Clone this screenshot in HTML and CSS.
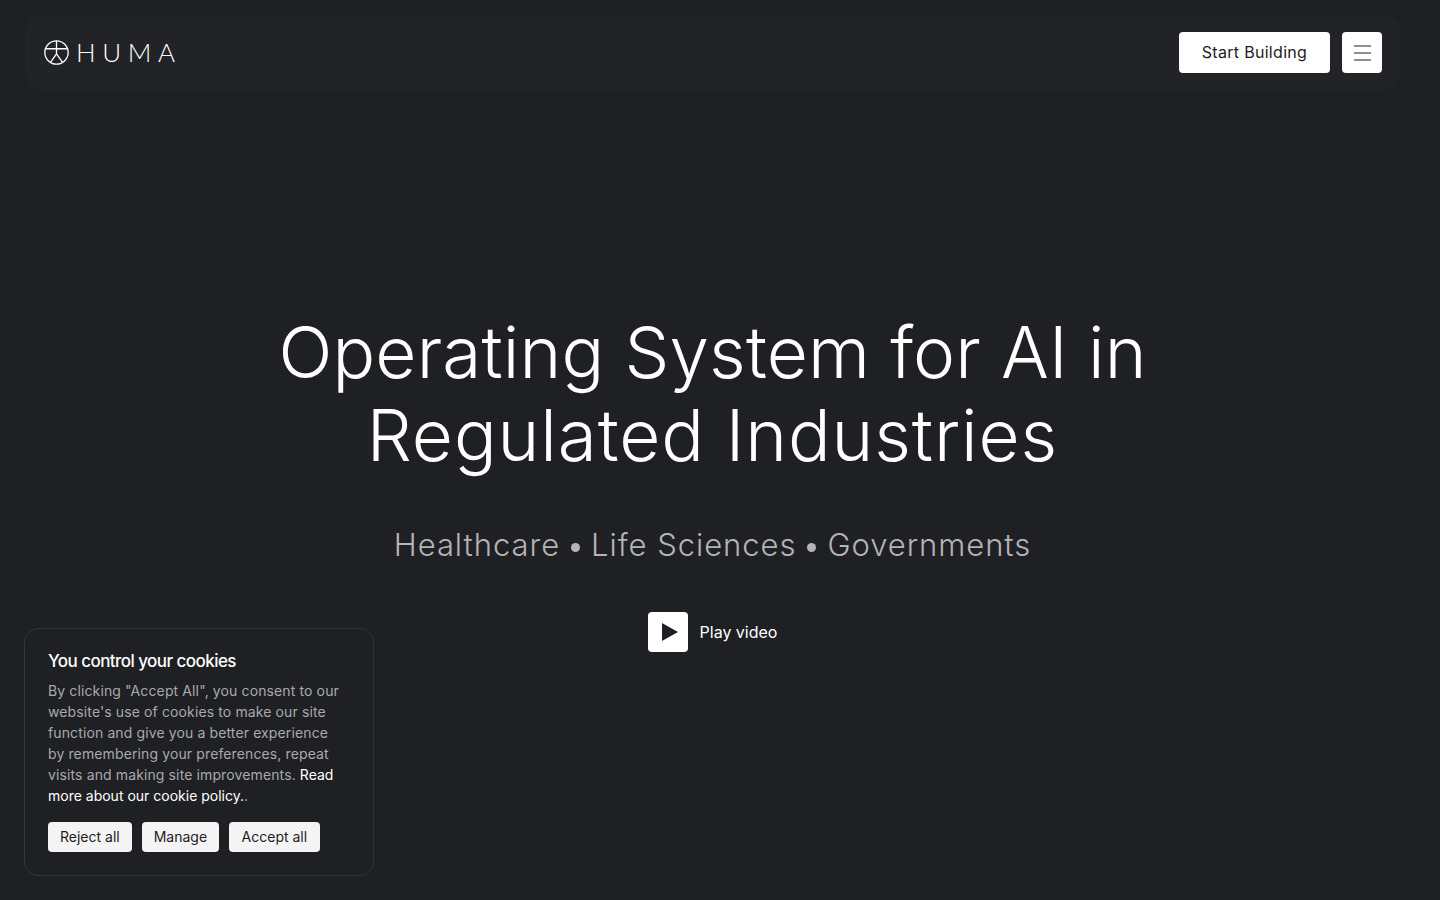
FILE: index.html
```html
<!DOCTYPE html>
<html lang="en">
<head>
<meta charset="utf-8">
<title>Huma</title>
<link rel="stylesheet" href="styles.css">
</head>
<body>
<div class="page">
  <header class="nav">
    <a class="logo" href="#">
      <svg class="logo-mark" viewBox="0 0 24 24" fill="none" stroke="#fff" stroke-width="1.25">
        <circle cx="12" cy="12" r="11.2"/>
        <path d="M2 8.4H22M12 0.8V13.4M12 13.4L6.2 21.4M12 13.4L17.8 21.4"/>
      </svg>
      <span class="logo-text">HUMA</span>
    </a>
    <div class="nav-actions">
      <a class="btn-start" href="#">Start Building</a>
      <button class="btn-menu" aria-label="Menu">
        <span class="bar"></span><span class="bar"></span><span class="bar"></span>
      </button>
    </div>
  </header>
  <main class="hero">
    <h1 class="title"><span class="title-line-a">Operating System for AI in</span><br><span class="title-line-b">Regulated Industries</span></h1>
    <p class="subtitle">Healthcare <span class="dot"></span> Life Sciences <span class="dot"></span> Governments</p>
    <a class="play" href="#">
      <span class="play-box"><svg class="play-icon" viewBox="0 0 16 18"><path d="M0 0L16 9L0 18Z" fill="#1f2024"/></svg></span>
      <span>Play video</span>
    </a>
  </main>
</div>
<aside class="cookie">
  <h2 class="cookie-title">You control your cookies</h2>
  <p class="cookie-text">By clicking "Accept All", you consent to our website's use of cookies to make our site function and give you a better experience by remembering your preferences, repeat visits and making site improvements. <a class="cookie-link" href="#">Read more about our cookie policy.</a>.</p>
  <div class="cookie-actions">
    <button class="cookie-btn">Reject all</button>
    <button class="cookie-btn">Manage</button>
    <button class="cookie-btn cookie-btn-wide">Accept all</button>
  </div>
</aside>
</body>
</html>
```
FILE: styles.css
```css
* { box-sizing: border-box; }
html, body { margin: 0; height: 100%; }
body {
  background: #1f2024;
  color: #fff;
  font-family: Inter, "Liberation Sans", sans-serif;
  overflow: hidden;
}
a { color: inherit; text-decoration: none; }
.page {
  width: 1425px;
  padding: 15px 25px 0;
}
.nav {
  height: 75px;
  background: #222327;
  border-radius: 16px;
  padding: 0 18px 0 19px;
  display: flex;
  align-items: center;
  justify-content: space-between;
}
.logo { display: flex; align-items: center; gap: 7px; }
.logo-mark { width: 25px; height: 25px; display: block; }
.logo-text {
  font-family: Lato, sans-serif;
  font-weight: 300;
  font-size: 26px;
  line-height: 1;
  letter-spacing: 6.6px;
  margin-top: -1px;
}
.nav-actions { display: flex; gap: 12px; }
.btn-start {
  width: 151px;
  height: 41px;
  background: #fff;
  color: #1f2024;
  border-radius: 4px;
  font-size: 16px;
  letter-spacing: 0.3px;
  padding-bottom: 2px;
  display: flex;
  align-items: center;
  justify-content: center;
}
.btn-menu {
  width: 40px;
  height: 41px;
  background: #fff;
  border: 0;
  border-radius: 4px;
  padding: 0;
  display: flex;
  flex-direction: column;
  align-items: center;
  justify-content: center;
  gap: 5px;
}
.bar { width: 17px; height: 2px; background: #8f8f92; display: block; }
.hero {
  display: flex;
  flex-direction: column;
  align-items: center;
  padding-top: 221px;
}
.title {
  margin: 0;
  font-size: 71px;
  line-height: 83px;
  font-weight: 350;
  text-align: center;
}
.title-line-a { letter-spacing: 0.15px; }
.title-line-b { letter-spacing: 0.9px; }
.subtitle {
  margin: 46px 0 0;
  font-size: 31px;
  line-height: 44px;
  font-weight: 350;
  letter-spacing: 0.95px;
  color: #b4b4b7;
  display: flex;
  align-items: center;
  gap: 11px;
}
.dot { width: 9px; height: 9px; border-radius: 50%; background: #b4b4b7; margin-top: 4px; }
.play {
  margin-top: 45px;
  display: flex;
  align-items: center;
  gap: 12px;
  font-size: 16px;
}
.play-box {
  width: 40px;
  height: 40px;
  background: #fff;
  border-radius: 4px;
  display: flex;
  align-items: center;
  justify-content: center;
}
.play-icon { width: 16px; height: 18px; display: block; margin-left: 4px; }
.cookie {
  position: fixed;
  left: 24px;
  top: 628px;
  width: 350px;
  height: 248px;
  background: #1f2024;
  border: 1px solid #34353a;
  border-radius: 14px;
  padding: 23px;
}
.cookie-title {
  margin: 0 0 10px;
  font-size: 17px;
  line-height: 18px;
  font-weight: 500;
  letter-spacing: -0.55px;
}
.cookie-text {
  margin: 0;
  max-width: 295px;
  font-size: 14px;
  line-height: 21px;
  color: #a9a9ac;
  letter-spacing: 0.12px;
}
.cookie-link { color: #fff; letter-spacing: 0; }
.cookie-actions { display: flex; gap: 10px; margin-top: 15px; padding-top: 1px; }
.cookie-btn {
  height: 30px;
  padding: 0 12px 1px;
  background: #f4f4f4;
  color: #1f2024;
  border: 0;
  border-radius: 4px;
  font-family: inherit;
  font-size: 14px;
}
.cookie-btn-wide { padding: 0 12.5px 1px; }
```
